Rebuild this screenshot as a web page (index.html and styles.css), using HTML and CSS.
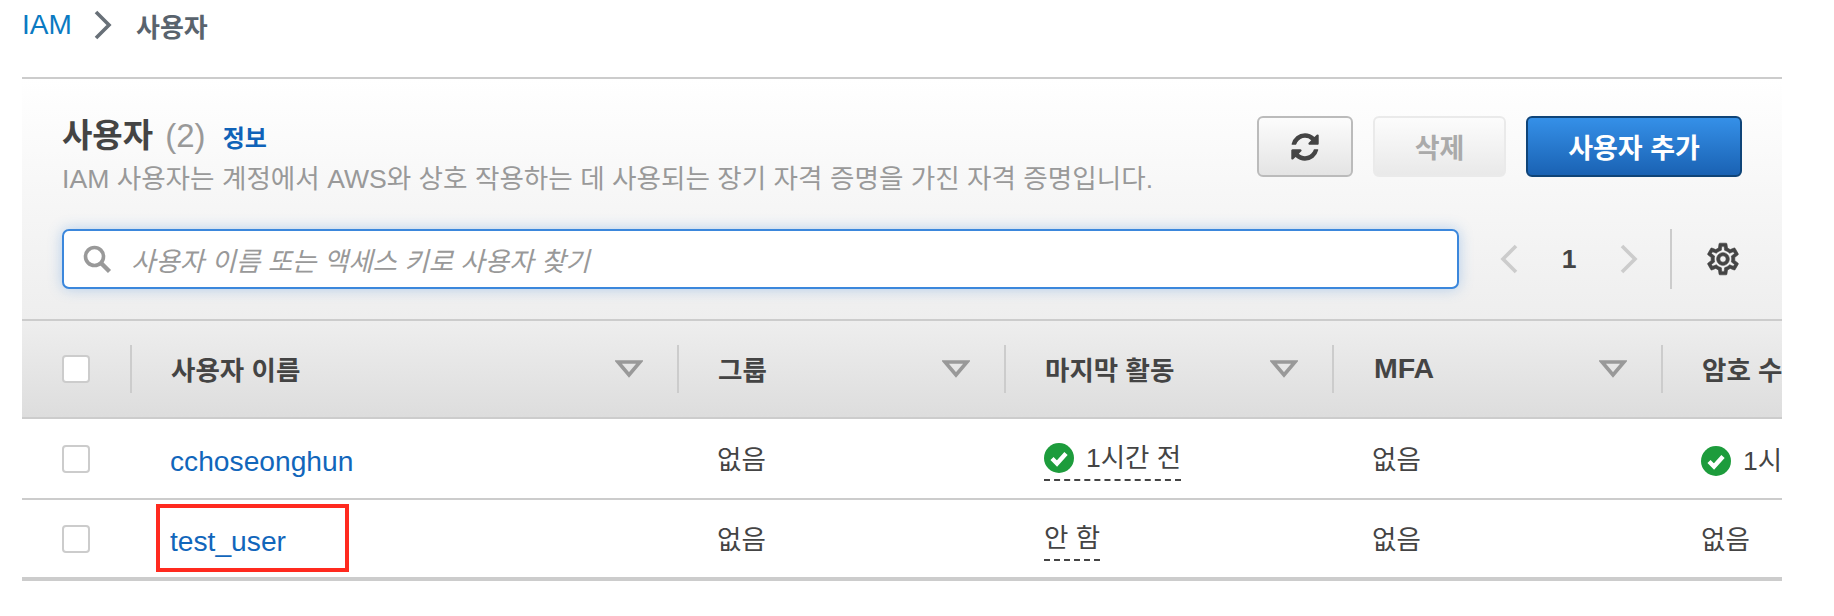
FILE: index.html
```html
<!DOCTYPE html>
<html lang="ko">
<head>
    <meta charset="UTF-8">
    <title>IAM 사용자</title>
    <link rel="stylesheet" href="styles.css">
</head>
<body>
    <div class="breadcrumb">
        <a class="crumb-link">IAM</a>
        <svg class="crumb-sep" viewBox="0 0 18 30"><path d="M2 2l13 13L2 28" fill="none" stroke="#687078" stroke-width="3.6"/></svg>
        <span class="crumb-current">사용자</span>
    </div>

    <div class="panel">
        <div class="panel-head">
            <div class="panel-title">
                <h1>사용자 <span class="count">(2)</span> <a class="info">정보</a></h1>
                <p>IAM 사용자는 계정에서 AWS와 상호 작용하는 데 사용되는 장기 자격 증명을 가진 자격 증명입니다.</p>
            </div>
            <div class="actions">
                <button class="btn btn-icon">
                    <svg viewBox="0 0 1792 1792" width="32" height="32"><path fill="#444" d="M1639 1056q0 5-1 7-64 268-268 434.5t-478 166.5q-146 0-282.5-55t-243.5-157l-129 129q-19 19-45 19t-45-19-19-45v-448q0-26 19-45t45-19h448q26 0 45 19t19 45-19 45l-137 137q71 66 161 102t187 36q134 0 250-65t186-179q11-17 53-117 8-23 30-23h192q13 0 22.5 9.5t9.5 22.5zm25-800v448q0 26-19 45t-45 19h-448q-26 0-45-19t-19-45 19-45l138-138q-148-137-349-137-134 0-250 65t-186 179q-11 17-53 117-8 23-30 23h-199q-13 0-22.5-9.5t-9.5-22.5v-7q65-268 270-434.5t480-166.5q146 0 284 55.5t245 156.5l130-129q19-19 45-19t45 19 19 45z"/></svg>
                </button>
                <button class="btn btn-disabled">삭제</button>
                <button class="btn btn-primary">사용자 추가</button>
            </div>
        </div>
        <div class="toolbar">
            <div class="search">
                <svg viewBox="0 0 30 30" width="30" height="30"><circle cx="12.5" cy="12.5" r="9" fill="none" stroke="#999" stroke-width="3.6"/><path d="M19 19l8.5 8.5" stroke="#999" stroke-width="4.4"/></svg>
                <span class="placeholder">사용자 이름 또는 액세스 키로 사용자 찾기</span>
            </div>
            <div class="pager">
                <svg viewBox="0 0 20 30" width="20" height="30"><path d="M17 2L4 15l13 13" fill="none" stroke="#ccc" stroke-width="3.6"/></svg>
                <span class="page-num">1</span>
                <svg viewBox="0 0 20 30" width="20" height="30"><path d="M3 2l13 13L3 28" fill="none" stroke="#ccc" stroke-width="3.6"/></svg>
            </div>
            <div class="tool-divider"></div>
            <svg class="gear" viewBox="0 0 24 24" width="38" height="38"><path fill="#444" stroke="#444" stroke-width="0.4" d="M19.43 12.98c.04-.32.07-.64.07-.98 0-.34-.03-.66-.07-.98l2.11-1.65c.19-.15.24-.42.12-.64l-2-3.46c-.09-.16-.26-.25-.44-.25-.06 0-.12.01-.17.03l-2.49 1c-.52-.4-1.08-.73-1.69-.98l-.38-2.65C14.46 2.18 14.25 2 14 2h-4c-.25 0-.46.18-.49.42l-.38 2.65c-.61.25-1.17.59-1.69.98l-2.49-1c-.06-.02-.12-.03-.18-.03-.17 0-.34.09-.43.25l-2 3.46c-.13.22-.07.49.12.64l2.11 1.65c-.04.32-.07.65-.07.98 0 .33.03.66.07.98l-2.11 1.65c-.19.15-.24.42-.12.64l2 3.46c.09.16.26.25.44.25.06 0 .12-.01.17-.03l2.49-1c.52.4 1.08.73 1.69.98l.38 2.65c.03.24.24.42.49.42h4c.25 0 .46-.18.49-.42l.38-2.65c.61-.25 1.17-.59 1.69-.98l2.49 1c.06.02.12.03.18.03.17 0 .34-.09.43-.25l2-3.46c.12-.22.07-.49-.12-.64l-2.11-1.65zm-1.98-1.71c.04.31.05.52.05.73 0 .21-.02.43-.05.73l-.14 1.13.89.7 1.08.84-.7 1.21-1.27-.51-1.04-.42-.9.68c-.43.32-.84.56-1.25.73l-1.06.43-.16 1.13-.2 1.35h-1.4l-.19-1.35-.16-1.13-1.06-.43c-.43-.18-.83-.41-1.23-.71l-.91-.7-1.06.43-1.27.51-.7-1.21 1.08-.84.89-.7-.14-1.13c-.03-.31-.05-.54-.05-.74s.02-.43.05-.73l.14-1.13-.89-.7-1.08-.84.7-1.21 1.27.51 1.04.42.9-.68c.43-.32.84-.56 1.25-.73l1.06-.43.16-1.13.2-1.35h1.39l.19 1.35.16 1.13 1.06.43c.43.18.83.41 1.23.71l.91.7 1.06-.43 1.27-.51.7 1.21-1.07.85-.89.7.14 1.13zM12 8c-2.21 0-4 1.79-4 4s1.79 4 4 4 4-1.79 4-4-1.79-4-4-4zm0 6c-1.1 0-2-.9-2-2s.9-2 2-2 2 .9 2 2-.9 2-2 2z"/></svg>
        </div>
    </div>

    <div class="table">
        <div class="row row-head">
            <div class="cell cell-check"><span class="checkbox"></span></div>
            <div class="cell th">사용자 이름<svg class="sort" viewBox="0 0 28 18"><path d="M3 2h22L14 15z" fill="none" stroke="#999" stroke-width="3.6"/></svg></div>
            <div class="cell th">그룹<svg class="sort" viewBox="0 0 28 18"><path d="M3 2h22L14 15z" fill="none" stroke="#999" stroke-width="3.6"/></svg></div>
            <div class="cell th">마지막 활동<svg class="sort" viewBox="0 0 28 18"><path d="M3 2h22L14 15z" fill="none" stroke="#999" stroke-width="3.6"/></svg></div>
            <div class="cell th th-latin">MFA<svg class="sort" viewBox="0 0 28 18"><path d="M3 2h22L14 15z" fill="none" stroke="#999" stroke-width="3.6"/></svg></div>
            <div class="cell th">암호 수명</div>
        </div>
        <div class="row">
            <div class="cell cell-check"><span class="checkbox"></span></div>
            <div class="cell td td-user"><a class="user-link">cchoseonghun</a></div>
            <div class="cell td">없음</div>
            <div class="cell td"><span class="dashed"><svg class="ok" viewBox="0 0 30 30" width="30" height="30"><circle cx="15" cy="15" r="15" fill="#1d9c3c"/><path d="M8 15.5l5 5 9-10" fill="none" stroke="#fff" stroke-width="4.4"/></svg>1시간 전</span></div>
            <div class="cell td">없음</div>
            <div class="cell td td-status"><svg class="ok" viewBox="0 0 30 30" width="30" height="30"><circle cx="15" cy="15" r="15" fill="#1d9c3c"/><path d="M8 15.5l5 5 9-10" fill="none" stroke="#fff" stroke-width="4.4"/></svg>1시간 전</div>
        </div>
        <div class="row row-last">
            <div class="cell cell-check"><span class="checkbox"></span></div>
            <div class="cell td td-user"><a class="user-link">test_user</a><span class="highlight"></span></div>
            <div class="cell td">없음</div>
            <div class="cell td"><span class="dashed">안 함</span></div>
            <div class="cell td">없음</div>
            <div class="cell td">없음</div>
        </div>
    </div>
</body>
</html>
```

FILE: styles.css
```css
* {
    box-sizing: border-box;
    margin: 0;
    padding: 0;
}
body {
    width: 1834px;
    height: 616px;
    padding: 0 52px 0 22px;
    background: #fff;
    color: #444;
    font-family: "Liberation Sans", "Noto Sans CJK KR", sans-serif;
    font-size: 26.5px;
    overflow: hidden;
}
.breadcrumb {
    height: 77px;
    padding-bottom: 27px;
    display: flex;
    align-items: center;
}
.crumb-link {
    color: #0a7ac2;
    font-size: 28px;
    width: 72px;
}
.crumb-sep {
    width: 18px;
    height: 30px;
}
.crumb-current {
    margin-left: 24px;
    color: #59636d;
    font-size: 26px;
    font-weight: 700;
}

.panel {
    height: 244px;
    border-top: 2px solid #ccc;
    border-bottom: 2px solid #ccc;
    background: linear-gradient(#fff, #eee);
    padding: 37px 40px 0;
}
.panel-head {
    display: flex;
    justify-content: space-between;
    height: 113px;
}
.panel-title h1 {
    font-size: 33px;
    font-weight: 700;
    line-height: 40px;
}
.count {
    color: #999;
    font-weight: 400;
    margin-left: 3px;
}
.info {
    color: #0f62b8;
    font-size: 24px;
    font-weight: 700;
    margin-left: 8px;
}
.panel-title p {
    color: #999;
    font-size: 26.6px;
    line-height: 30px;
    margin-top: 5px;
}
.actions {
    display: flex;
    gap: 20px;
}
.btn {
    height: 61px;
    font-family: inherit;
    font-size: 27px;
    font-weight: 700;
    border-radius: 6px;
}
.btn-icon {
    width: 96px;
    border: 2px solid #bbb;
    background: linear-gradient(#fcfcfc, #e4e4e4);
    display: flex;
    align-items: center;
    justify-content: center;
}
.btn-disabled {
    width: 133px;
    color: #aaa;
    border: 2px solid #eaeaea;
    background: linear-gradient(#fcfcfc, #e9e9e9);
}
.btn-primary {
    width: 216px;
    color: #fff;
    border: 2px solid #0f4478;
    background: linear-gradient(#3590e8, #1a62b3);
}

.toolbar {
    display: flex;
    align-items: center;
    height: 60px;
}
.search {
    width: 1399px;
    height: 60px;
    display: flex;
    align-items: center;
    gap: 19px;
    padding-left: 18px;
    background: #fff;
    border: 2px solid #3b87dc;
    border-radius: 7px;
    box-shadow: 0 0 14px rgba(59, 135, 220, 0.35);
}
.placeholder {
    color: #999;
    font-style: italic;
    font-size: 26.5px;
}
.pager {
    display: flex;
    align-items: center;
    margin-left: 40px;
}
.page-num {
    width: 100px;
    text-align: center;
    font-weight: 700;
}
.tool-divider {
    width: 2px;
    height: 60px;
    background: #ccc;
    margin-left: 31px;
}
.gear {
    margin-left: 32px;
}

.table {
    overflow: hidden;
}
.row {
    display: grid;
    grid-template-columns: 108px 547px 327px 328px 329px 321px;
    height: 81px;
    border-bottom: 2px solid #ccc;
    align-items: center;
    background: #fff;
}
.row-head {
    height: 98px;
    background: linear-gradient(#eee, #ddd);
}
.row-last {
    border-bottom-width: 4px;
}
.cell {
    position: relative;
    display: flex;
    align-items: center;
    white-space: nowrap;
}
.cell-check {
    padding-left: 40px;
}
.checkbox {
    display: block;
    width: 28px;
    height: 28px;
    background: #fff;
    border: 2px solid #ccc;
    border-radius: 4px;
}
.th {
    height: 48px;
    padding: 0 0 2px 39px;
    font-weight: 700;
    border-left: 2px solid #ccc;
}
.th-latin {
    padding-left: 40px;
    font-size: 28.5px;
}
.sort {
    position: absolute;
    right: 34px;
    top: 15px;
    width: 28px;
    height: 18px;
}
.td {
    align-self: stretch;
    padding: 2px 0 0 40px;
    line-height: 30px;
}
.td-user {
    padding-top: 5px;
}
.td-status {
    padding-top: 5px;
}
.user-link {
    color: #1166bb;
    font-size: 28.2px;
}
.ok {
    margin-right: 12px;
}
.dashed {
    display: inline-flex;
    align-items: center;
    margin-top: 5px;
    padding-bottom: 6px;
    border-bottom: 2px dashed #444;
}
.highlight {
    position: absolute;
    left: 26px;
    top: 4px;
    width: 193px;
    height: 68px;
    border: 4px solid #ff2a1f;
}
```
